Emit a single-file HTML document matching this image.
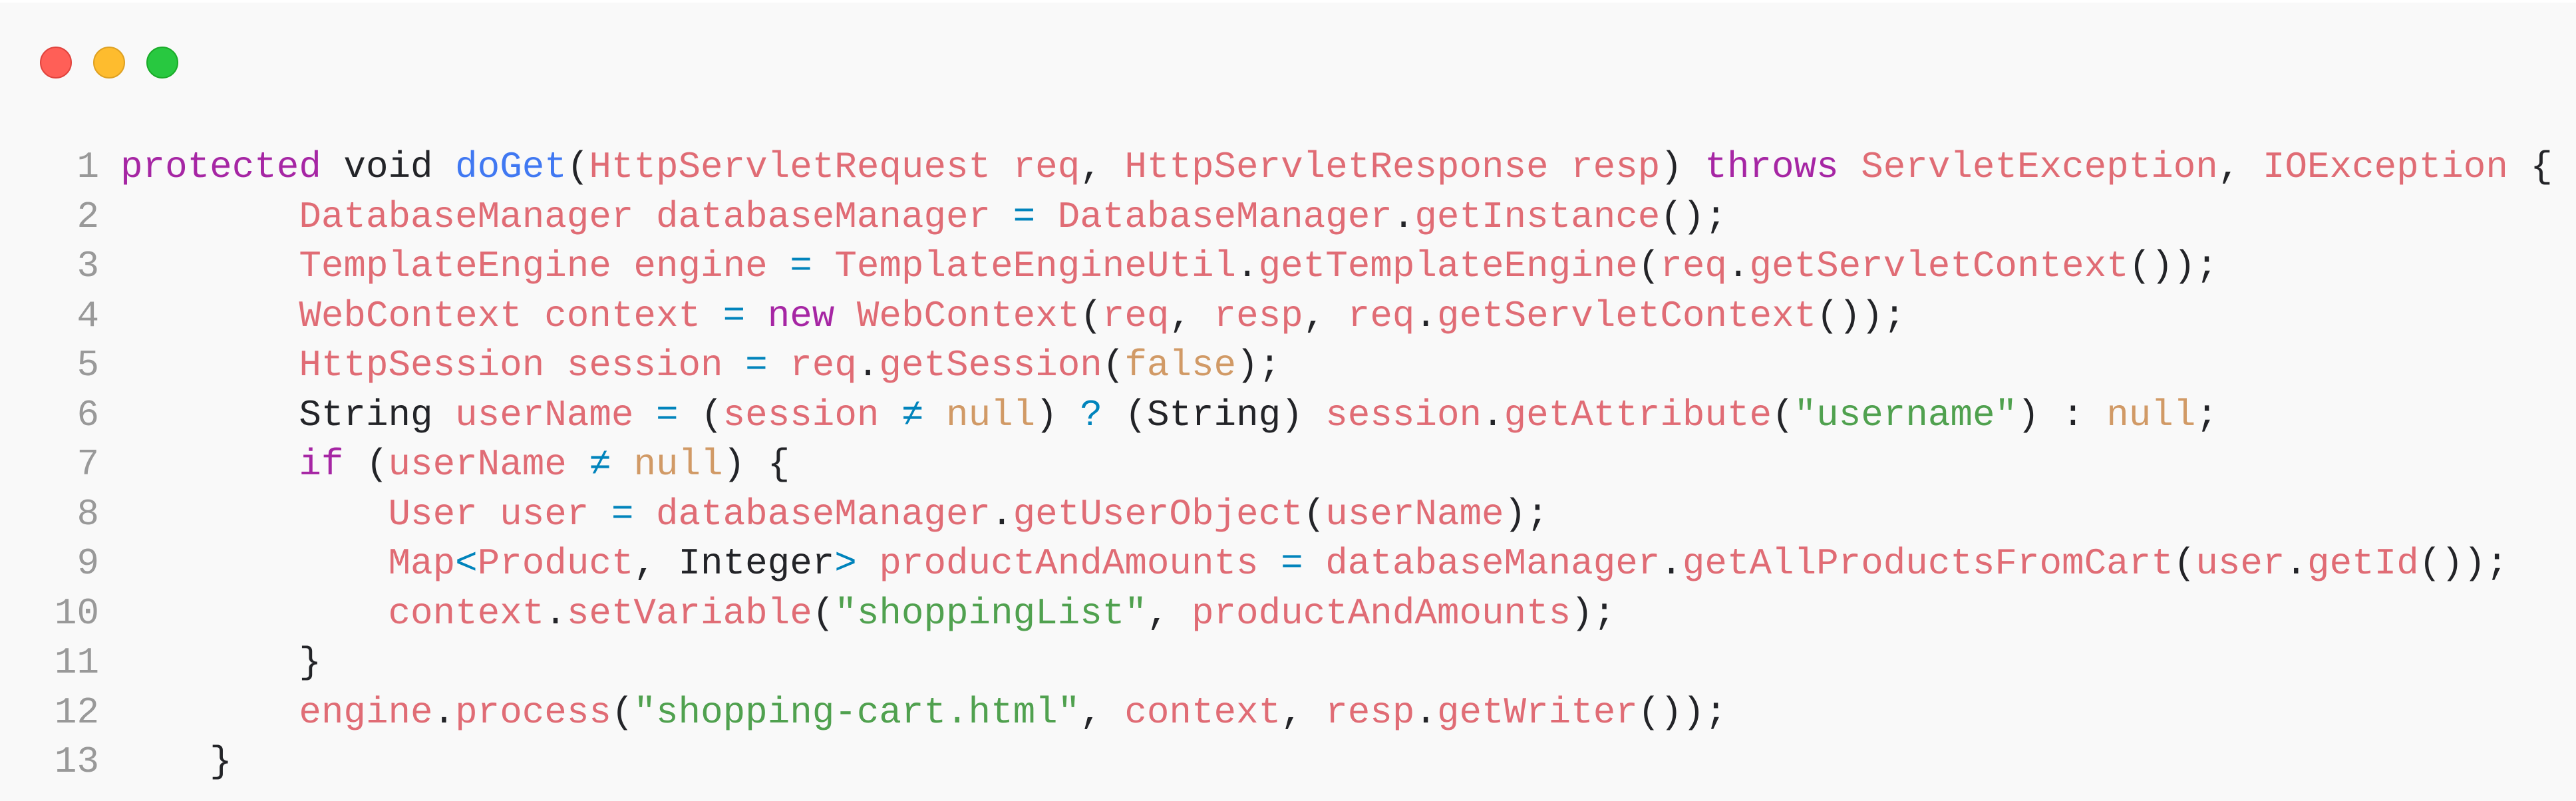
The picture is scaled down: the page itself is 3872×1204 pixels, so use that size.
<!DOCTYPE html>
<html><head><meta charset="utf-8"><style>
html,body{margin:0;padding:0;}
body{width:3872px;height:1204px;background:#f9f9f9;position:relative;overflow:hidden;border-top:4px solid #fff;box-sizing:border-box;}
.dot{position:absolute;top:66px;width:48px;height:48px;border-radius:50%;box-sizing:border-box;}
.r{left:60px;background:#ff5f57;border:2px solid #e0443e;}
.y{left:140px;background:#febc2e;border:2px solid #dea123;}
.g{left:220px;background:#28c840;border:2px solid #1aab29;}
.code{position:absolute;left:0;top:210px;font-family:"Liberation Mono",monospace;font-size:55.9px;line-height:74.5px;white-space:pre;color:#232428;}
.ln{display:inline-block;width:149px;text-align:right;color:#999;margin-right:32px;}
.k{color:#a626a4}.f{color:#4078f2}.t{color:#e06c75}.o{color:#0184bc}.s{color:#50a14f}.n{color:#d19a66}
</style></head><body>
<div class="dot r"></div><div class="dot y"></div><div class="dot g"></div>
<div class="code"><div><span class="ln">1</span><span class="k">protected</span> void <span class="f">doGet</span>(<span class="t">HttpServletRequest req</span>, <span class="t">HttpServletResponse resp</span>) <span class="k">throws</span> <span class="t">ServletException</span>, <span class="t">IOException</span> {</div><div><span class="ln">2</span>        <span class="t">DatabaseManager databaseManager</span> <span class="o">=</span> <span class="t">DatabaseManager</span>.<span class="t">getInstance</span>();</div><div><span class="ln">3</span>        <span class="t">TemplateEngine engine</span> <span class="o">=</span> <span class="t">TemplateEngineUtil</span>.<span class="t">getTemplateEngine</span>(<span class="t">req</span>.<span class="t">getServletContext</span>());</div><div><span class="ln">4</span>        <span class="t">WebContext context</span> <span class="o">=</span> <span class="k">new</span> <span class="t">WebContext</span>(<span class="t">req</span>, <span class="t">resp</span>, <span class="t">req</span>.<span class="t">getServletContext</span>());</div><div><span class="ln">5</span>        <span class="t">HttpSession session</span> <span class="o">=</span> <span class="t">req</span>.<span class="t">getSession</span>(<span class="n">false</span>);</div><div><span class="ln">6</span>        String <span class="t">userName</span> <span class="o">=</span> (<span class="t">session</span> <span class="o">≠</span> <span class="n">null</span>) <span class="o">?</span> (String) <span class="t">session</span>.<span class="t">getAttribute</span>(<span class="s">"username"</span>) : <span class="n">null</span>;</div><div><span class="ln">7</span>        <span class="k">if</span> (<span class="t">userName</span> <span class="o">≠</span> <span class="n">null</span>) {</div><div><span class="ln">8</span>            <span class="t">User user</span> <span class="o">=</span> <span class="t">databaseManager</span>.<span class="t">getUserObject</span>(<span class="t">userName</span>);</div><div><span class="ln">9</span>            <span class="t">Map</span><span class="o">&lt;</span><span class="t">Product</span>, Integer<span class="o">&gt;</span> <span class="t">productAndAmounts</span> <span class="o">=</span> <span class="t">databaseManager</span>.<span class="t">getAllProductsFromCart</span>(<span class="t">user</span>.<span class="t">getId</span>());</div><div><span class="ln">10</span>            <span class="t">context</span>.<span class="t">setVariable</span>(<span class="s">"shoppingList"</span>, <span class="t">productAndAmounts</span>);</div><div><span class="ln">11</span>        }</div><div><span class="ln">12</span>        <span class="t">engine</span>.<span class="t">process</span>(<span class="s">"shopping-cart.html"</span>, <span class="t">context</span>, <span class="t">resp</span>.<span class="t">getWriter</span>());</div><div><span class="ln">13</span>    }</div></div>
</body></html>
